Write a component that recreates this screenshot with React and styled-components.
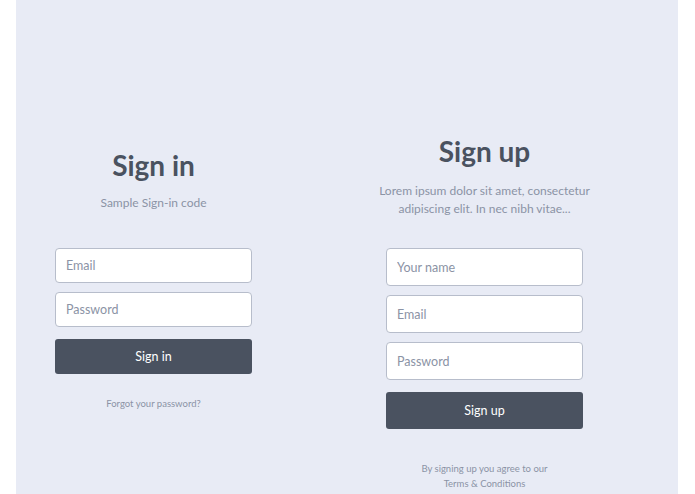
import React from "react";
import styled, { createGlobalStyle } from "styled-components";

const GlobalStyle = createGlobalStyle`
  html, body {
    margin: 0;
    padding: 0;
    background: #ffffff;
  }
  body {
    font-family: Lato, "Noto Sans", "Liberation Sans", sans-serif;
  }
  * {
    box-sizing: border-box;
  }
`;

const Panel = styled.div`
  margin: 0 17px 0 16px;
  height: 494px;
  background: #e8ebf5;
  display: grid;
  grid-template-columns: 1fr 1fr;
  overflow: hidden;
`;

const Column = styled.section`
  width: 275px;
  padding: ${(props) => props.top}px 39px 0;
  display: flex;
  flex-direction: column;
  align-items: stretch;
  text-align: center;
`;

const Title = styled.h2`
  margin: 0;
  font-size: 28px;
  line-height: 34px;
  font-weight: 700;
  color: #4a5260;
`;

const Subtitle = styled.p`
  margin: ${(props) => props.gap}px -20px ${(props) => props.after}px;
  font-size: 12px;
  line-height: 18px;
  color: #8b93a5;
`;

const Fields = styled.form`
  display: flex;
  flex-direction: column;
  gap: ${(props) => props.gap}px;
`;

const Input = styled.input`
  width: 100%;
  height: ${(props) => props.h}px;
  padding: 0 10px;
  border: 1px solid #b7bdcb;
  border-radius: 4px;
  background: #ffffff;
  font-family: inherit;
  font-size: 12.5px;
  color: #4a5260;
  outline: none;

  &::placeholder {
    color: #8b93a5;
  }
`;

const Button = styled.button`
  width: 100%;
  height: ${(props) => props.h}px;
  margin-top: 3px;
  border: none;
  border-radius: 3px;
  background: #4a5260;
  color: #ffffff;
  font-family: inherit;
  font-size: 12.5px;
  cursor: pointer;
`;

const Note = styled.p`
  margin: ${(props) => props.gap}px 0 0;
  font-size: 9.5px;
  line-height: 15px;
  color: #8b93a5;
`;

export default function App() {
  return (
    <>
      <GlobalStyle />
      <Panel>
        <Column top={148}>
          <Title>Sign in</Title>
          <Subtitle gap={12} after={36}>Sample Sign-in code</Subtitle>
          <Fields gap={9} onSubmit={(e) => e.preventDefault()}>
            <Input h={35} type="email" placeholder="Email" />
            <Input h={35} type="password" placeholder="Password" />
            <Button h={35}>Sign in</Button>
          </Fields>
          <Note gap={22}>Forgot your password?</Note>
        </Column>
        <Column top={134}>
          <Title>Sign up</Title>
          <Subtitle gap={14} after={30}>
            Lorem ipsum dolor sit amet, consectetur
            <br />
            adipiscing elit. In nec nibh vitae...
          </Subtitle>
          <Fields gap={9} onSubmit={(e) => e.preventDefault()}>
            <Input h={38} type="text" placeholder="Your name" />
            <Input h={38} type="email" placeholder="Email" />
            <Input h={38} type="password" placeholder="Password" />
            <Button h={37}>Sign up</Button>
          </Fields>
          <Note gap={32}>
            By signing up you agree to our
            <br />
            Terms &amp; Conditions
          </Note>
        </Column>
      </Panel>
    </>
  );
}
